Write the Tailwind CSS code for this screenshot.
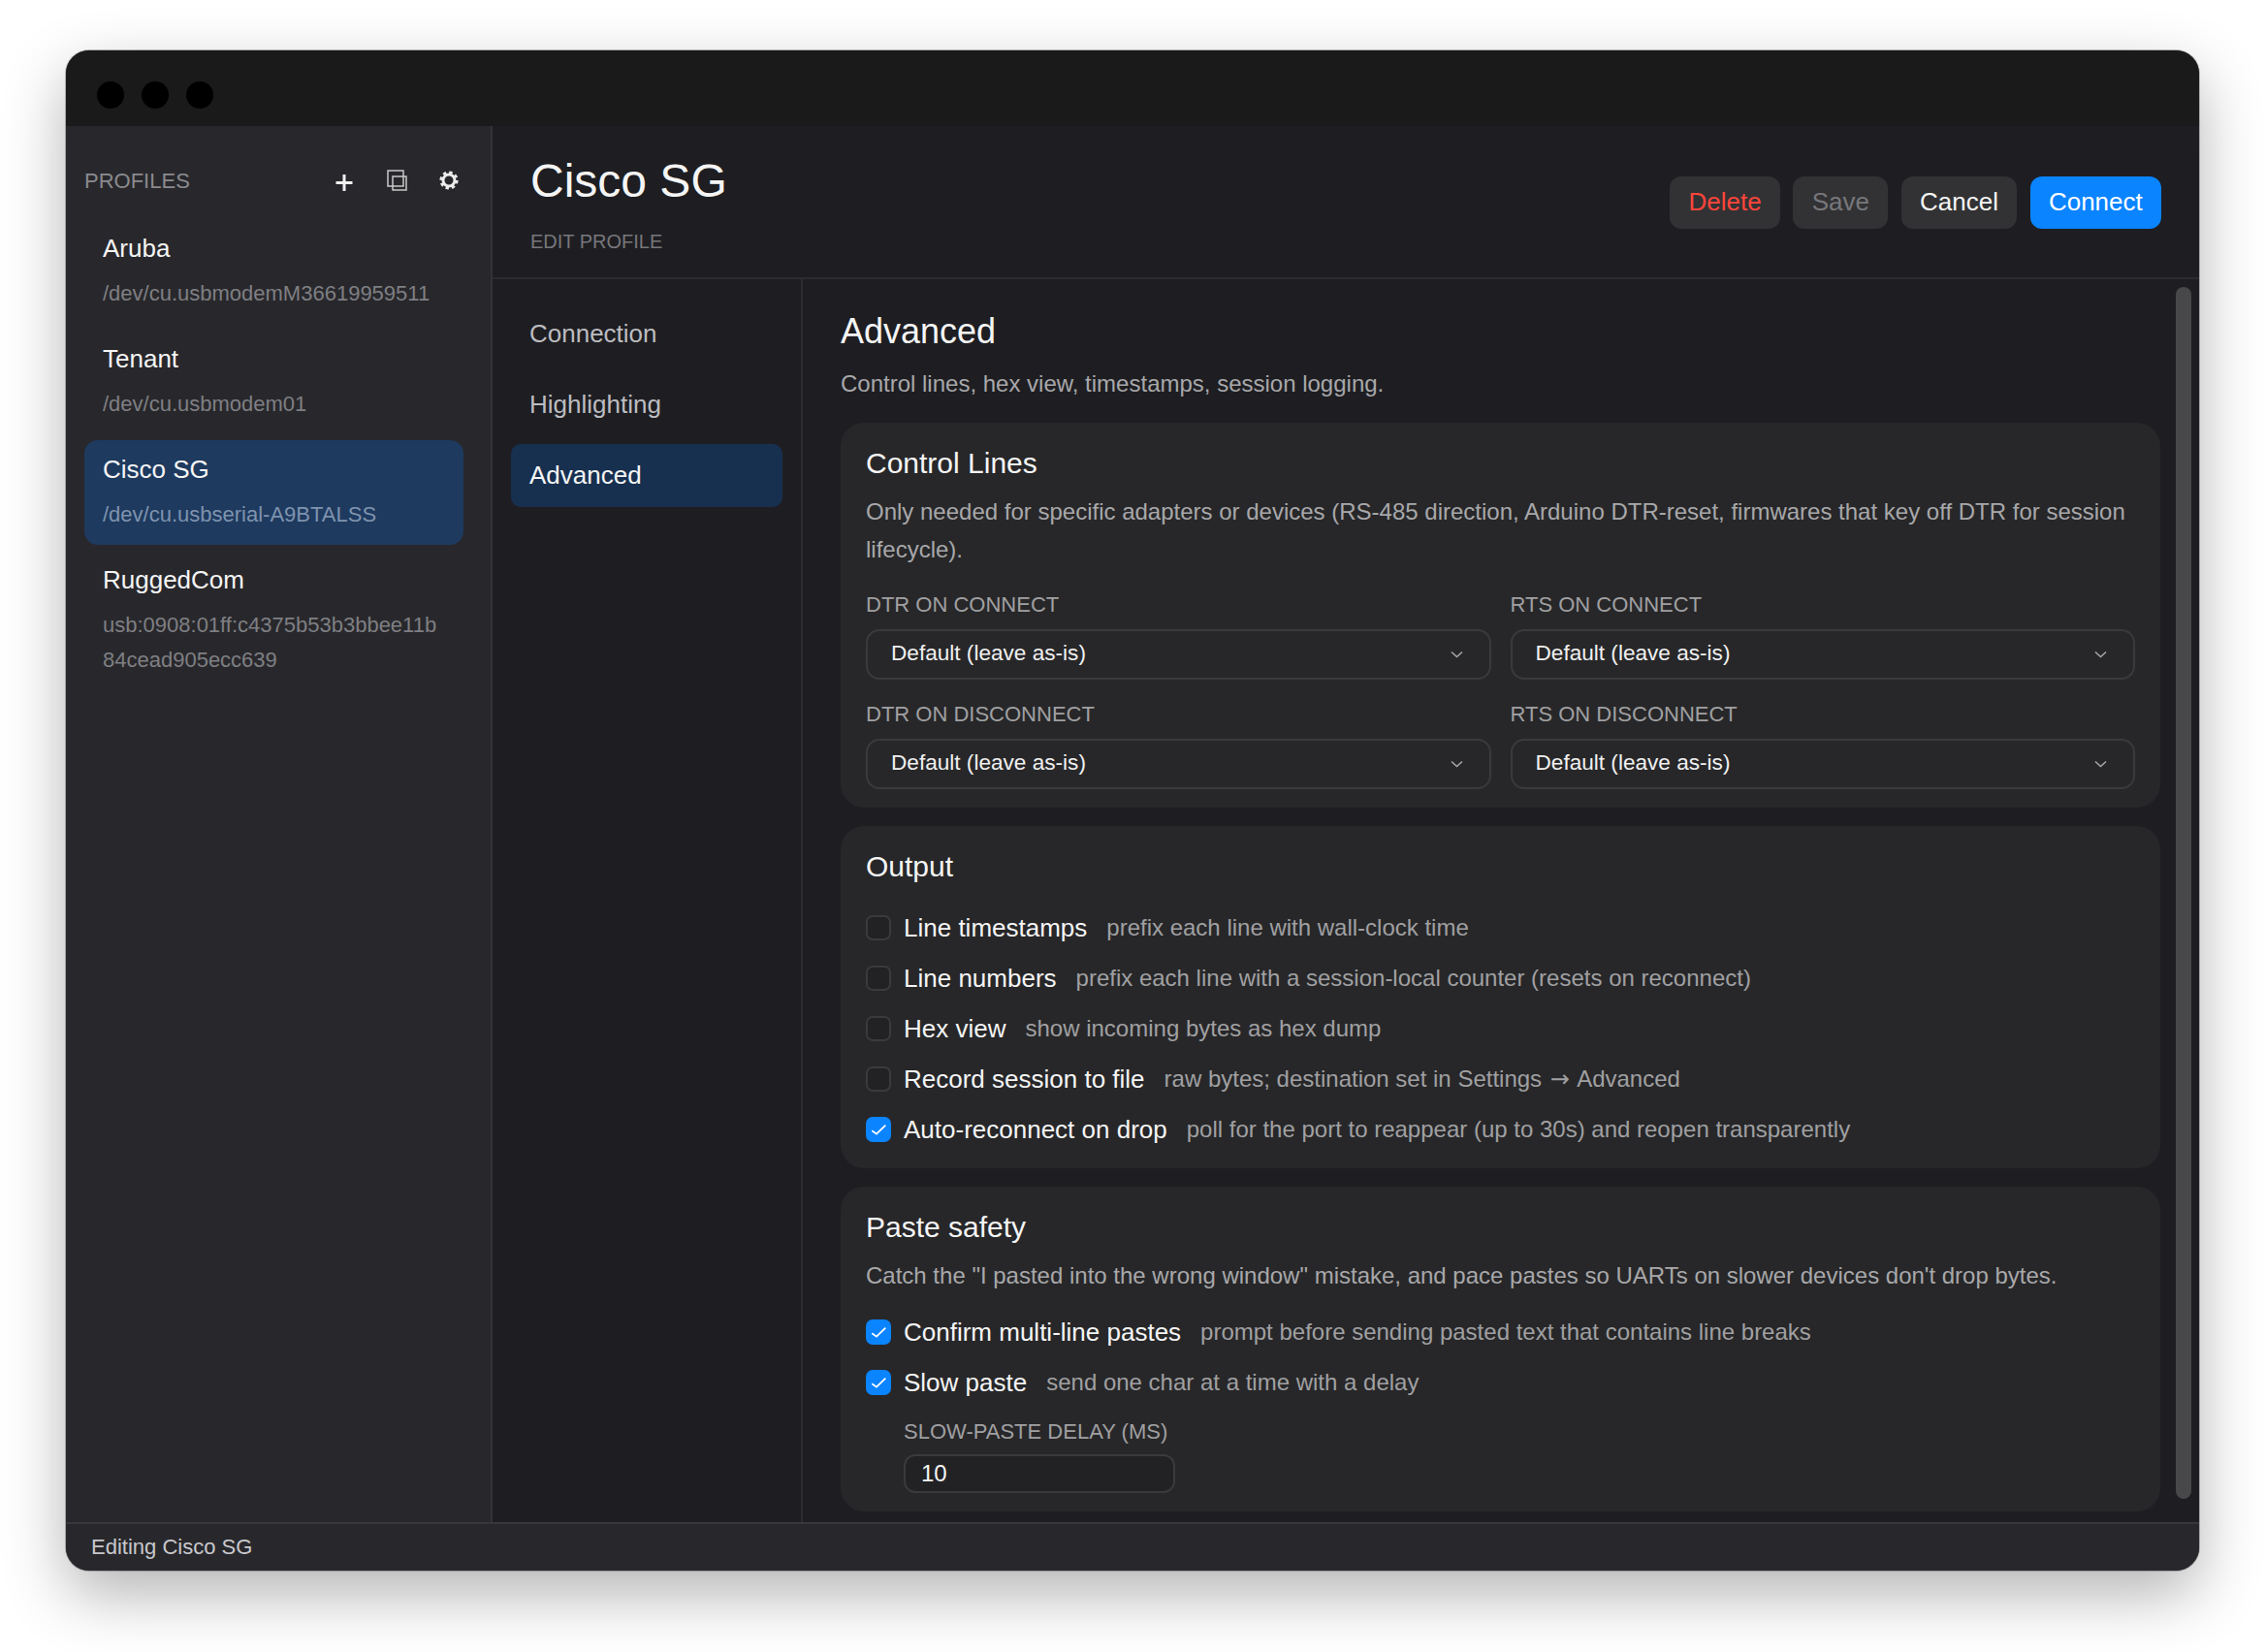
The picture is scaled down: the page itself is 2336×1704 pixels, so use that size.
<!DOCTYPE html>
<html lang="en">
<head>
<meta charset="utf-8">
<title>Cisco SG</title>
<script src="https://cdn.jsdelivr.net/npm/@tailwindcss/browser@4"></script>
</head>
<body class="bg-white font-['Liberation_Sans',Arial,sans-serif] antialiased">
<div class="w-[2336px] h-[1704px] pt-[52px] pl-[68px] overflow-hidden">
  <div class="w-[2200px] h-[1568px] rounded-[24px] overflow-hidden flex flex-col bg-[#1e1e22] shadow-[0_0_0_1px_rgba(0,0,0,0.25),0_24px_64px_rgba(0,0,0,0.3)]">
    <!-- title bar -->
    <div class="h-[78px] shrink-0 bg-[#1a1a1a] flex items-center pl-[32px] gap-[18px] pt-[14px]">
      <span class="w-[28px] h-[28px] rounded-full bg-black"></span>
      <span class="w-[28px] h-[28px] rounded-full bg-black"></span>
      <span class="w-[28px] h-[28px] rounded-full bg-black"></span>
    </div>
    <div class="flex-1 flex min-h-0">
      <!-- sidebar -->
      <aside class="w-[440px] shrink-0 bg-[#28282c] border-r-2 border-[#333337] pl-[19px] pr-[28px]">
        <div class="h-[90px] pt-[22px] flex items-center justify-between">
          <span class="text-[22px] text-[#8a8a8e]">PROFILES</span>
          <div class="flex items-center gap-[30px] pr-[3px]">
            <svg class="w-[24px] h-[24px] mt-[3px]" viewBox="0 0 24 24"><path d="M12 4v17M3.500 12.500h17" stroke="#f0f0f0" stroke-width="3" fill="none"/></svg>
            <svg class="w-[24px] h-[24px] -mt-[2px]" viewBox="0 0 24 24" fill="none" stroke="#c8c8c8" stroke-width="1.500"><path d="M3 3h16v16H3z"/><path d="M8 9h14v14H8z"/></svg>
            <svg class="w-[24px] h-[24px] -mt-[1px]" viewBox="0 0 24 24" fill="none" stroke="#ececec"><circle cx="12" cy="12" r="6" stroke-width="3"/><circle cx="12" cy="12" r="8" stroke-width="3.200" stroke-dasharray="3.280 3"/></svg>
          </div>
        </div>
        <div class="flex flex-col gap-[6px] pt-[6px]">
          <div class="px-[19px] pt-[12px] pb-[13px] rounded-[14px]">
            <div class="text-[26px] leading-[36px] text-[#f5f5f5] mb-[11px]">Aruba</div>
            <div class="text-[22px] leading-[36px] text-[#7f7f83]">/dev/cu.usbmodemM36619959511</div>
          </div>
          <div class="px-[19px] pt-[12px] pb-[13px] rounded-[14px]">
            <div class="text-[26px] leading-[36px] text-[#f5f5f5] mb-[11px]">Tenant</div>
            <div class="text-[22px] leading-[36px] text-[#7f7f83]">/dev/cu.usbmodem01</div>
          </div>
          <div class="px-[19px] pt-[12px] pb-[13px] rounded-[14px] bg-[#1e3a5f]">
            <div class="text-[26px] leading-[36px] text-[#f5f5f5] mb-[11px]">Cisco SG</div>
            <div class="text-[22px] leading-[36px] text-[#7f93ae]">/dev/cu.usbserial-A9BTALSS</div>
          </div>
          <div class="px-[19px] pt-[12px] pb-[13px] rounded-[14px]">
            <div class="text-[26px] leading-[36px] text-[#f5f5f5] mb-[11px]">RuggedCom</div>
            <div class="text-[22px] leading-[36px] text-[#7f7f83] break-all">usb:0908:01ff:c4375b53b3bbee11b84cead905ecc639</div>
          </div>
        </div>
      </aside>
      <!-- main -->
      <main class="flex-1 min-w-0 flex flex-col">
        <header class="h-[158px] shrink-0 border-b-2 border-[#2c2c30] pl-[39px] pr-[39px] flex items-start justify-between">
          <div>
            <h1 class="text-[48px] leading-[56px] text-[#f5f5f5] mt-[29px]">Cisco SG</h1>
            <div class="text-[20px] leading-[28px] text-[#77777b] mt-[20px]">EDIT PROFILE</div>
          </div>
          <div class="flex gap-[13.500px] mt-[52px]">
            <button class="h-[54px] px-[19.250px] pb-[2px] rounded-[12px] bg-[#323234] text-[26px] text-[#ff453a]">Delete</button>
            <button class="h-[54px] px-[19.250px] pb-[2px] rounded-[12px] bg-[#323234] text-[26px] text-[#77777b]">Save</button>
            <button class="h-[54px] px-[19.250px] pb-[2px] rounded-[12px] bg-[#323234] text-[26px] text-[#f5f5f5]">Cancel</button>
            <button class="h-[54px] px-[19.250px] pb-[2px] rounded-[12px] bg-[#0a84ff] text-[26px] text-white">Connect</button>
          </div>
        </header>
        <div class="flex-1 min-h-0 flex">
          <nav class="w-[320px] shrink-0 border-r-2 border-[#2e2e32] pl-[19px] pr-[19px] pt-[24px] flex flex-col gap-[8px]">
            <div class="h-[65px] px-[19px] flex items-center rounded-[10px] text-[26px] text-[#bcbcc0]">Connection</div>
            <div class="h-[65px] px-[19px] flex items-center rounded-[10px] text-[26px] text-[#bcbcc0]">Highlighting</div>
            <div class="h-[65px] px-[19px] pb-[1px] flex items-center rounded-[10px] text-[26px] text-[#f5f5f5] bg-[#17304f]">Advanced</div>
          </nav>
          <section class="flex-1 min-w-0 relative overflow-hidden pl-[39px] pr-[40px] pt-[32px]">
            <div class="absolute right-[8px] top-[8px] w-[16px] h-[1250px] rounded-full bg-[#48484a]"></div>
            <h2 class="text-[36px] leading-[44px] text-[#f5f5f5]">Advanced</h2>
            <p class="text-[24px] leading-[36px] text-[#a8a8aa] mt-[14px] mb-[22px]">Control lines, hex view, timestamps, session logging.</p>
            <div class="flex flex-col gap-[19px]">
              <!-- control lines -->
              <div class="h-[397px] rounded-[24px] bg-[#272729] px-[26px] pt-[23px]">
                <h3 class="text-[30px] leading-[38px] text-[#f5f5f5]">Control Lines</h3>
                <p class="text-[24px] leading-[39px] text-[#a8a8aa] mt-[11px]">Only needed for specific adapters or devices (RS-485 direction, Arduino DTR-reset, firmwares that key off DTR for session lifecycle).</p>
                <div class="grid grid-cols-2 gap-x-[20px] gap-y-[18px] mt-[20px]">
                  <div>
                    <div class="text-[22px] leading-[36px] text-[#a0a0a2] mb-[7px]">DTR ON CONNECT</div>
                    <div class="h-[52px] pl-[24px] pr-[27px] pb-[3px] flex items-center justify-between rounded-[14px] border-2 border-[#3a3a3c] text-[22.600px] text-[#f0f0f0]"><span>Default (leave as-is)</span><svg class="w-[13px] h-[8px] mt-[3px]" viewBox="0 0 13 8" fill="none" stroke="#a8a8aa" stroke-width="1.500"><path d="M1 1.500l5.500 5 5.500-5"/></svg></div>
                  </div>
                  <div>
                    <div class="text-[22px] leading-[36px] text-[#a0a0a2] mb-[7px]">RTS ON CONNECT</div>
                    <div class="h-[52px] pl-[24px] pr-[27px] pb-[3px] flex items-center justify-between rounded-[14px] border-2 border-[#3a3a3c] text-[22.600px] text-[#f0f0f0]"><span>Default (leave as-is)</span><svg class="w-[13px] h-[8px] mt-[3px]" viewBox="0 0 13 8" fill="none" stroke="#a8a8aa" stroke-width="1.500"><path d="M1 1.500l5.500 5 5.500-5"/></svg></div>
                  </div>
                  <div>
                    <div class="text-[22px] leading-[36px] text-[#a0a0a2] mb-[7px]">DTR ON DISCONNECT</div>
                    <div class="h-[52px] pl-[24px] pr-[27px] pb-[3px] flex items-center justify-between rounded-[14px] border-2 border-[#3a3a3c] text-[22.600px] text-[#f0f0f0]"><span>Default (leave as-is)</span><svg class="w-[13px] h-[8px] mt-[3px]" viewBox="0 0 13 8" fill="none" stroke="#a8a8aa" stroke-width="1.500"><path d="M1 1.500l5.500 5 5.500-5"/></svg></div>
                  </div>
                  <div>
                    <div class="text-[22px] leading-[36px] text-[#a0a0a2] mb-[7px]">RTS ON DISCONNECT</div>
                    <div class="h-[52px] pl-[24px] pr-[27px] pb-[3px] flex items-center justify-between rounded-[14px] border-2 border-[#3a3a3c] text-[22.600px] text-[#f0f0f0]"><span>Default (leave as-is)</span><svg class="w-[13px] h-[8px] mt-[3px]" viewBox="0 0 13 8" fill="none" stroke="#a8a8aa" stroke-width="1.500"><path d="M1 1.500l5.500 5 5.500-5"/></svg></div>
                  </div>
                </div>
              </div>
              <!-- output -->
              <div class="h-[353px] rounded-[24px] bg-[#272729] px-[26px] pt-[23px]">
                <h3 class="text-[30px] leading-[38px] text-[#f5f5f5]">Output</h3>
                <div class="mt-[18px] flex flex-col">
                  <div class="h-[52px] flex items-center"><span class="w-[26px] h-[26px] rounded-[7px] border-2 border-[#3a3a3c] bg-[#222224] mr-[13px]"></span><span class="text-[26px] text-[#f5f5f5] mr-[20px]">Line timestamps</span><span class="text-[24px] text-[#a0a0a2]">prefix each line with wall-clock time</span></div>
                  <div class="h-[52px] flex items-center"><span class="w-[26px] h-[26px] rounded-[7px] border-2 border-[#3a3a3c] bg-[#222224] mr-[13px]"></span><span class="text-[26px] text-[#f5f5f5] mr-[20px]">Line numbers</span><span class="text-[24px] text-[#a0a0a2]">prefix each line with a session-local counter (resets on reconnect)</span></div>
                  <div class="h-[52px] flex items-center"><span class="w-[26px] h-[26px] rounded-[7px] border-2 border-[#3a3a3c] bg-[#222224] mr-[13px]"></span><span class="text-[26px] text-[#f5f5f5] mr-[20px]">Hex view</span><span class="text-[24px] text-[#a0a0a2]">show incoming bytes as hex dump</span></div>
                  <div class="h-[52px] flex items-center"><span class="w-[26px] h-[26px] rounded-[7px] border-2 border-[#3a3a3c] bg-[#222224] mr-[13px]"></span><span class="text-[26px] text-[#f5f5f5] mr-[20px]">Record session to file</span><span class="text-[24px] text-[#a0a0a2]">raw bytes; destination set in Settings <span class="inline-block w-[24px] text-center font-['DejaVu_Sans']">→</span> Advanced</span></div>
                  <div class="h-[52px] flex items-center"><span class="w-[26px] h-[26px] rounded-[7px] bg-[#0a84ff] mr-[13px] flex"><svg class="w-[26px] h-[26px]" viewBox="0 0 26 26" fill="none" stroke="#fff" stroke-width="1.800"><path d="M6.300 14.300l4.700 3.400 9.300-9"/></svg></span><span class="text-[26px] text-[#f5f5f5] mr-[20px]">Auto-reconnect on drop</span><span class="text-[24px] text-[#a0a0a2]">poll for the port to reappear (up to 30s) and reopen transparently</span></div>
                </div>
              </div>
              <!-- paste safety -->
              <div class="h-[335px] rounded-[24px] bg-[#272729] px-[26px] pt-[23px]">
                <h3 class="text-[30px] leading-[38px] text-[#f5f5f5]">Paste safety</h3>
                <p class="text-[24px] leading-[39px] text-[#a8a8aa] mt-[11px]">Catch the "I pasted into the wrong window" mistake, and pace pastes so UARTs on slower devices don't drop bytes.</p>
                <div class="mt-[13px] flex flex-col">
                  <div class="h-[52px] flex items-center"><span class="w-[26px] h-[26px] rounded-[7px] bg-[#0a84ff] mr-[13px] flex"><svg class="w-[26px] h-[26px]" viewBox="0 0 26 26" fill="none" stroke="#fff" stroke-width="1.800"><path d="M6.300 14.300l4.700 3.400 9.300-9"/></svg></span><span class="text-[26px] text-[#f5f5f5] mr-[20px]">Confirm multi-line pastes</span><span class="text-[24px] text-[#a0a0a2]">prompt before sending pasted text that contains line breaks</span></div>
                  <div class="h-[52px] flex items-center"><span class="w-[26px] h-[26px] rounded-[7px] bg-[#0a84ff] mr-[13px] flex"><svg class="w-[26px] h-[26px]" viewBox="0 0 26 26" fill="none" stroke="#fff" stroke-width="1.800"><path d="M6.300 14.300l4.700 3.400 9.300-9"/></svg></span><span class="text-[26px] text-[#f5f5f5] mr-[20px]">Slow paste</span><span class="text-[24px] text-[#a0a0a2]">send one char at a time with a delay</span></div>
                </div>
                <div class="pl-[39px] mt-[7px]">
                  <div class="text-[22px] leading-[36px] text-[#a0a0a2] mb-[5px]">SLOW-PASTE DELAY (MS)</div>
                  <div class="w-[280px] h-[40px] rounded-[12px] border-2 border-[#3a3a3c] bg-[#222224] pl-[16px] pb-[1px] flex items-center text-[24px] text-[#f5f5f5]">10</div>
                </div>
              </div>
            </div>
          </section>
        </div>
      </main>
    </div>
    <!-- status bar -->
    <footer class="h-[50px] shrink-0 bg-[#28282c] border-t-2 border-[#38383c] pl-[26px] pb-[2px] flex items-center text-[22px] text-[#c8c8cc]">Editing Cisco SG</footer>
  </div>
</div>
</body>
</html>
